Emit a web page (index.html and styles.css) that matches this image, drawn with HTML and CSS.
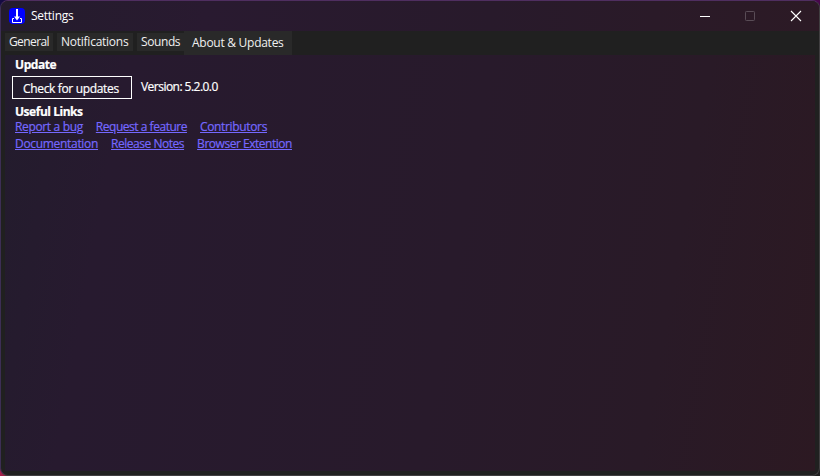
FILE: index.html
```html
<!DOCTYPE html>
<html lang="en">
<head>
<meta charset="utf-8">
<title>Settings</title>
<link rel="stylesheet" href="styles.css">
</head>
<body>
<div class="window">
  <header class="titlebar">
    <svg class="app-icon" viewBox="0 0 16 16"><rect width="16" height="16" rx="4" fill="#0000fe"/><path d="M8 1v9" stroke="#fff" stroke-width="2"/><path d="M5 8.500h6L8 12.500z" fill="#fff"/><path d="M5 10.500H3.500v4h9v-4H11" fill="none" stroke="#fff"/></svg>
    <span class="title">Settings</span>
    <div class="controls">
      <svg viewBox="0 0 12 12"><path d="M1 6.500h10" stroke="#fff"/></svg>
      <svg viewBox="0 0 12 12"><rect x="1.500" y="1.500" width="9" height="9" rx=".8" fill="none" stroke="#594c56"/></svg>
      <svg viewBox="0 0 12 12"><path d="M1 1l10 10M11 1L1 11" stroke="#fff" stroke-width="1.100"/></svg>
    </div>
  </header>
  <nav class="tabs">
    <span class="tab general">General</span>
    <span class="tab notifications">Notifications</span>
    <span class="tab sounds">Sounds</span>
    <span class="tab active">About &amp; Updates</span>
  </nav>
  <main class="panel">
    <h2>Update</h2>
    <div class="update-row">
      <button>Check for updates</button>
      <span class="version">Version: 5.2.0.0</span>
    </div>
    <h2 class="links-heading">Useful Links</h2>
    <div class="links"><a class="report">Report a bug</a><a class="request">Request a feature</a><a class="contributors">Contributors</a></div>
    <div class="links"><a class="docs">Documentation</a><a class="notes">Release Notes</a><a class="extension">Browser Extention</a></div>
  </main>
</div>
</body>
</html>
```
FILE: styles.css
```css
* { box-sizing: border-box; }
body {
  margin: 0;
  height: 476px;
  overflow: hidden;
  background: linear-gradient(90deg, #a8204a, #202020 5%, #202020 95%, #202020) bottom / 100% 12px no-repeat, linear-gradient(90deg, #150b42, #48074b);
  font: 12px/16px "Open Sans", "Noto Sans", sans-serif;
  color: #fff;
}
.window {
  display: flex;
  flex-direction: column;
  height: 476px;
  border: 1px solid #403e40;
  border-top-color: #4f2e60;
  border-left-color: #3d2e55;
  border-radius: 8px;
  background: #202020;
  overflow: hidden;
}
.titlebar {
  display: flex;
  align-items: center;
  height: 30px;
  padding: 0 17px 0 8px;
  background: linear-gradient(90deg, #241c2d, #291a30 25%, #281a2b 60%, #2c1a25);
}
.app-icon { width: 16px; height: 16px; }
.title { margin-left: 6px; letter-spacing: -.25px; }
.controls { display: flex; gap: 33.500px; margin: -1px 0 0 auto; }
.controls svg { width: 12px; height: 12px; }
.controls svg:nth-child(2) { margin: 0 .5px 0 -.5px; }
.tabs {
  display: flex;
  flex: none;
  height: 24px;
  padding-left: 4px;
  color: #f0f0f0;
}
.tab {
  height: 18px;
  margin: 2px 4px 0 0;
  padding-left: 4px;
  background: #292929;
  line-height: 18px;
  white-space: nowrap;
}
.general { width: 48px; letter-spacing: -.6px; }
.notifications { width: 76px; letter-spacing: -.25px; }
.sounds { width: 47px; margin-right: 0; letter-spacing: -.4px; }
.active { width: 108px; height: 24px; margin: 0; padding-left: 8px; line-height: 24px; letter-spacing: -.27px; }
.panel {
  flex: 1;
  margin: 0 4px 4px;
  padding: 2px 7px;
  background: linear-gradient(100deg, #231c2d, #271a2f 14%, #281a2b 55%, #291a27 80%, #2c1922);
  -webkit-text-stroke: .2px;
}
h2 { margin: 0 3px; font-size: 12px; line-height: 16px; letter-spacing: -.42px; }
.update-row { display: flex; margin-top: 3px; }
button {
  width: 120px;
  height: 23px;
  padding: 3px 0 0 10px;
  border: 1px solid #fff;
  background: none;
  color: inherit;
  font: inherit;
  letter-spacing: -.34px;
  text-align: left;
  white-space: nowrap;
}
.version { margin: 3px 0 0 9px; letter-spacing: -.53px; }
.links-heading { margin-top: 5px; letter-spacing: -.47px; }
.links { display: flex; gap: 13px; height: 17px; margin-left: 3px; line-height: 14px; white-space: nowrap; }
.links a { color: #7568ff; text-decoration: underline; }
.report, .contributors { letter-spacing: -.35px; }
.docs { letter-spacing: -.31px; }
.request, .notes, .extension { letter-spacing: -.47px; }
```
